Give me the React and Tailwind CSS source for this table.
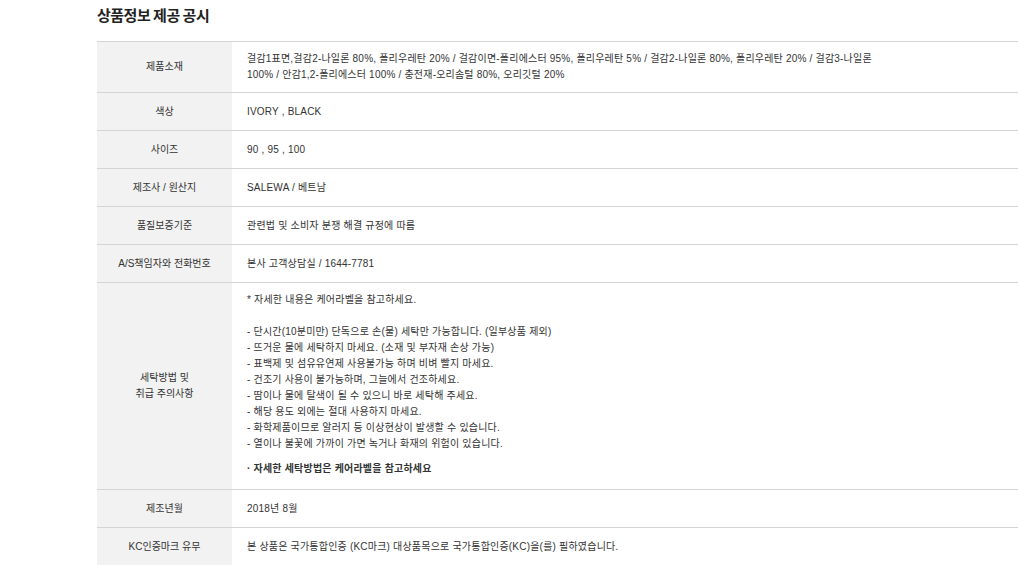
import React from "react";

const font = { fontFamily: '"Noto Sans CJK KR", "Noto Sans", sans-serif' };
const bodyFont = { fontFamily: '"Liberation Sans", "Noto Sans CJK KR", sans-serif' };

function Row({ label, children, h, align = "items-center" }) {
  return (
    <div className={`flex border-b border-[#d5d5d5] ${h}`} style={bodyFont}>
      <div className="w-[135px] shrink-0 bg-[#f2f2f2] flex items-center justify-center text-center text-[10px] leading-4 text-[#333]">
        {label}
      </div>
      <div className={`flex-1 flex ${align} pl-[15px] pr-[15px] text-[10px] leading-4 tracking-[0.2px] text-[#333]`}>
        {children}
      </div>
    </div>
  );
}

export default function App() {
  const care = [
    "- 단시간(10분미만) 단독으로 손(물) 세탁만 가능합니다. (일부상품 제외)",
    "- 뜨거운 물에 세탁하지 마세요. (소재 및 부자재 손상 가능)",
    "- 표백제 및 섬유유연제 사용불가능 하며 비벼 빨지 마세요.",
    "- 건조기 사용이 불가능하며, 그늘에서 건조하세요.",
    "- 땀이나 물에 탈색이 될 수 있으니 바로 세탁해 주세요.",
    "- 해당 용도 외에는 절대 사용하지 마세요.",
    "- 화학제품이므로 알러지 등 이상현상이 발생할 수 있습니다.",
    "- 열이나 불꽃에 가까이 가면 녹거나 화재의 위험이 있습니다.",
  ];
  return (
    <div className="w-[1018px] h-[565px] overflow-hidden bg-white" style={font}>
      <div className="pl-[97px] w-[922px] box-content">
        <h2 className="h-[41px] pt-[5px] text-[15px] leading-5 font-bold text-[#222] tracking-[-0.5px]">
          상품정보 제공 공시
        </h2>
        <div className="border-t border-[#d5d5d5]">
          <Row label="제품소재" h="h-[51px]">
            <div>
              걸감1표면,걸감2-나일론 80%, 폴리우레탄 20% / 걸감이면-폴리에스터 95%, 폴리우레탄 5% / 걸감2-나일론 80%, 폴리우레탄 20% / 걸감3-나일론
              <br />
              100% / 안감1,2-폴리에스터 100% / 충전재-오리솜털 80%, 오리깃털 20%
            </div>
          </Row>
          <Row label="색상" h="h-[38px]">IVORY , BLACK</Row>
          <Row label="사이즈" h="h-[38px]">90 , 95 , 100</Row>
          <Row label="제조사 / 원산지" h="h-[38px]">SALEWA / 베트남</Row>
          <Row label="품질보증기준" h="h-[38px]">관련법 및 소비자 분쟁 해결 규정에 따름</Row>
          <Row label="A/S책임자와 전화번호" h="h-[38px]">본사 고객상담실 / 1644-7781</Row>
          <Row
            label={
              <span>
                세탁방법 및<br />취급 주의사항
              </span>
            }
            h="h-[207px]"
            align="items-start"
          >
            <div className="pt-[9px]">
              <div>* 자세한 내용은 케어라벨을 참고하세요.</div>
              <div className="h-4" />
              {care.map((c) => (
                <div key={c}>{c}</div>
              ))}
              <div className="mt-[9px] font-bold">· 자세한 세탁방법은 케어라벨을 참고하세요</div>
            </div>
          </Row>
          <Row label="제조년월" h="h-[38px]">2018년 8월</Row>
          <Row label="KC인증마크 유무" h="h-[38px]">
            본 상품은 국가통합인증 (KC마크) 대상품목으로 국가통합인증(KC)을(를) 필하였습니다.
          </Row>
        </div>
      </div>
    </div>
  );
}
